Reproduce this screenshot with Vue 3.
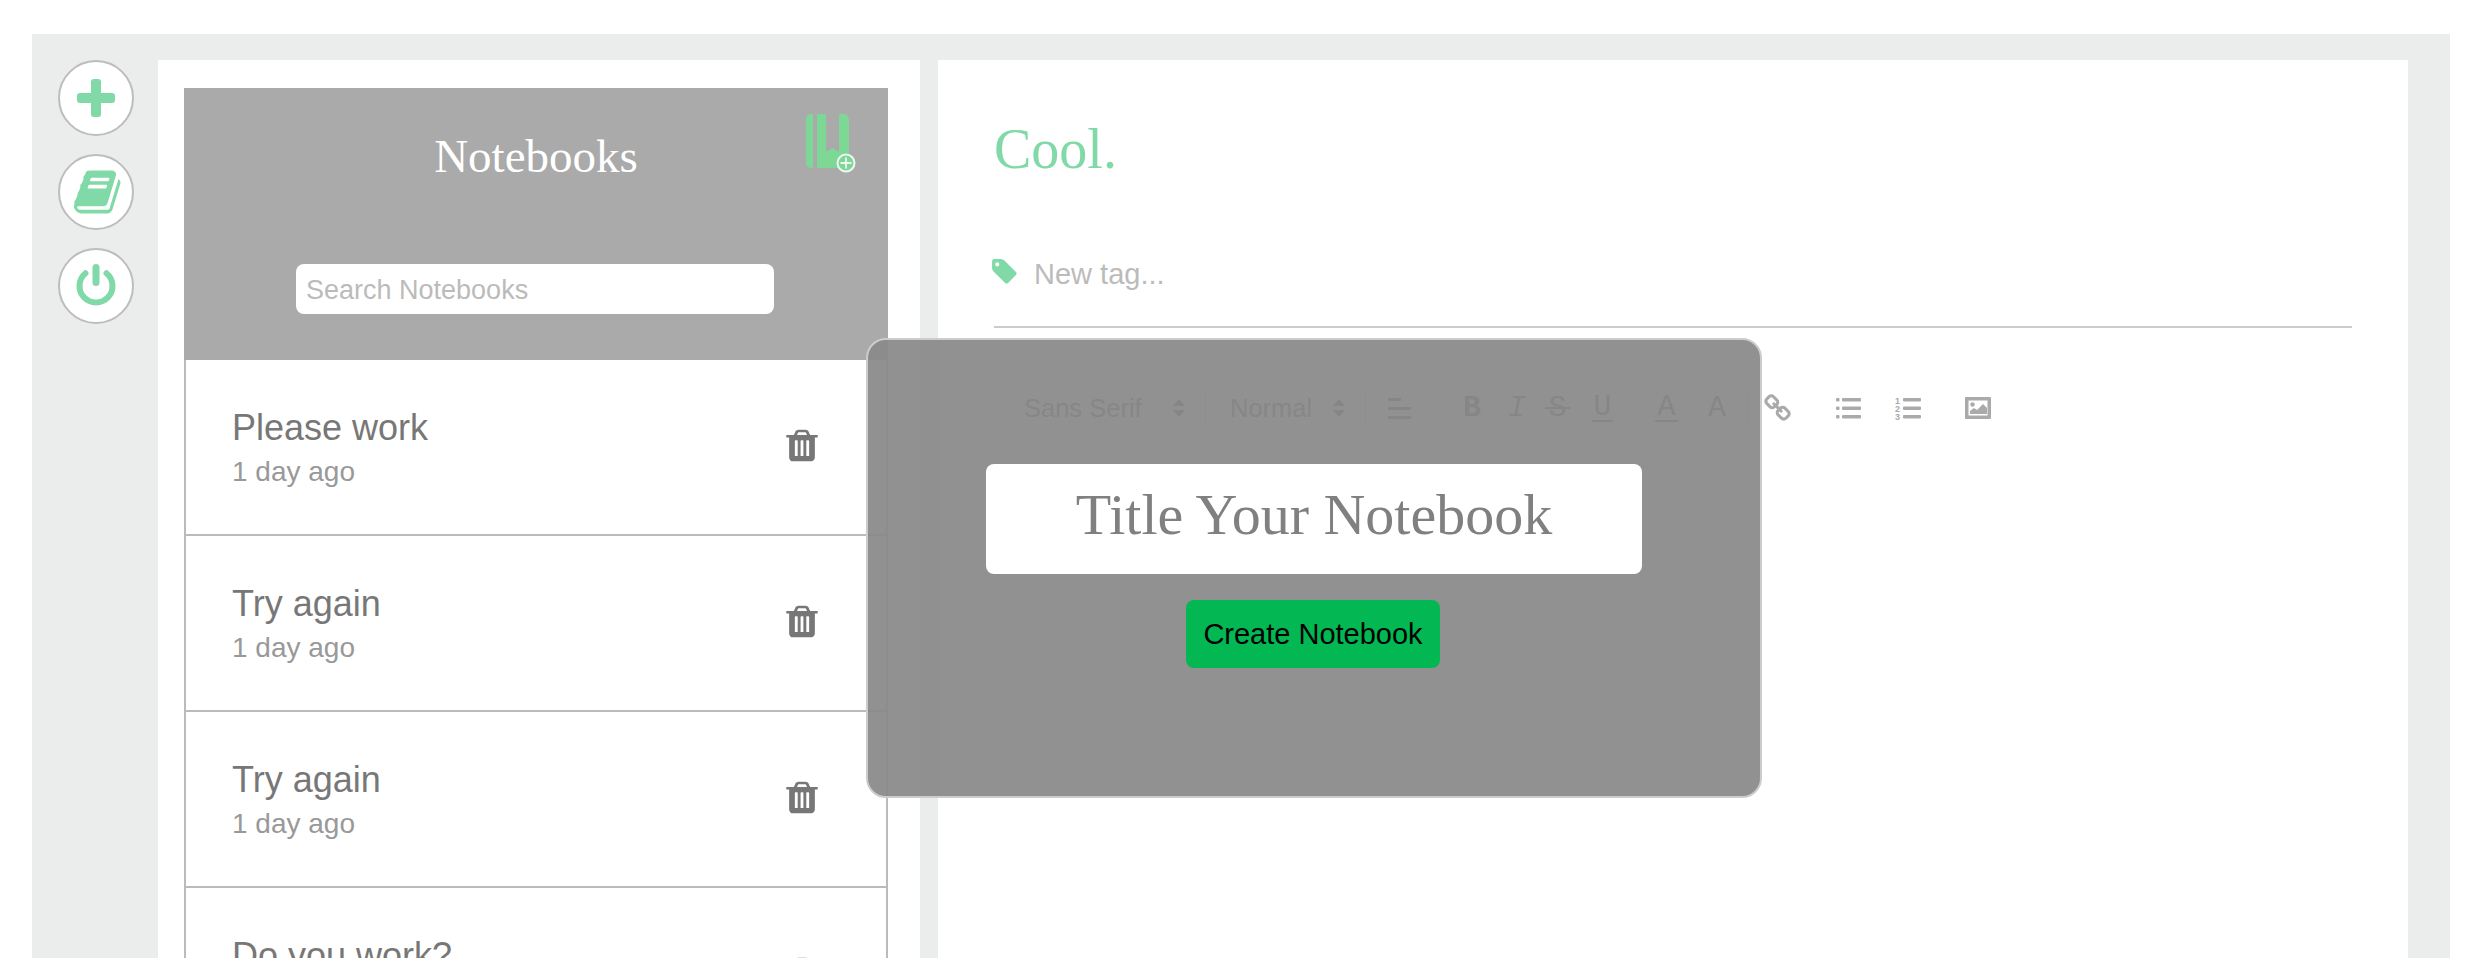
<script setup>
const notebooks = [
  { title: 'Please work', age: '1 day ago' },
  { title: 'Try again', age: '1 day ago' },
  { title: 'Try again', age: '1 day ago' },
  { title: 'Do you work?', age: '1 day ago' }
]

const trashPath = 'M704 1376v-704q0-14-9-23t-23-9h-64q-14 0-23 9t-9 23v704q0 14 9 23t23 9h64q14 0 23-9t9-23zm256 0v-704q0-14-9-23t-23-9h-64q-14 0-23 9t-9 23v704q0 14 9 23t23 9h64q14 0 23-9t9-23zm256 0v-704q0-14-9-23t-23-9h-64q-14 0-23 9t-9 23v704q0 14 9 23t23 9h64q14 0 23-9t9-23zm-544-992h448l-48-117q-7-9-17-11h-317q-10 2-17 11zm928 32v64q0 14-9 23t-23 9h-96v948q0 83-47 143.5t-113 60.5h-832q-66 0-113-58.5t-47-141.5v-952h-96q-14 0-23-9t-9-23v-64q0-14 9-23t23-9h309l70-167q15-37 54-63t79-26h320q40 0 79 26t54 63l70 167h309q14 0 23 9t9 23z'
</script>

<template>
<div class="page">
  <div class="frame">
    <nav class="rail">
      <button class="round">
        <svg width="38" height="38" viewBox="0 0 38 38" fill="#80d9a6"><rect x="14" y="0" width="10" height="38" rx="3"/><rect x="0" y="14" width="38" height="10" rx="3"/></svg>
      </button>
      <button class="round book">
        <svg width="50" height="50" viewBox="0 0 1792 1792"><path fill="#80d9a6" d="M1639 478q40 57 18 129l-275 906q-19 64-76.500 107.500t-122.500 43.500h-923q-77 0-148.500-53.500t-99.500-131.500q-24-67-2-127 0-4 3-27t4-37q1-8-3-21.500t-3-19.500q2-11 8-21t16.500-23.500 16.500-23.500q23-38 45-91.500t30-91.500q3-10 .5-30t-.5-28q3-11 17-28t17-23q21-36 42-92t25-90q1-9-2.500-32t.5-28q4-13 22-30.500t22-22.500q19-26 42.500-84.500t27.500-96.500q1-8-3-25.500t-2-26.500q2-8 9-18t18-23 17-21q8-12 16.500-30.500t15-35 16-36 19.500-32 26.500-23.500 36-11.500 47.500 5.500l-1 3q38-9 51-9h761q74 0 114 56t18 130l-274 906q-36 119-71.500 153.500t-128.500 34.500h-869q-27 0-38 15-11 16-1 43 24 70 144 70h923q29 0 56-15.500t35-41.500l300-987q7-22 5-57 38 15 59 43zm-1064 2q-4 13 2 22.500t20 9.500h608q13 0 25.500-9.500t16.500-22.500l21-64q4-13-2-22.500t-20-9.500h-608q-13 0-25.500 9.500t-16.500 22.500zm-83 256q-4 13 2 22.500t20 9.500h608q13 0 25.500-9.500t16.500-22.500l21-64q4-13-2-22.500t-20-9.500h-608q-13 0-25.500 9.500t-16.500 22.500z"/></svg>
      </button>
      <button class="round">
        <svg width="42" height="44" viewBox="0 0 42 44"><path d="M10.500 9.300a16.500 16.500 0 1 0 21 0" fill="none" stroke="#80d9a6" stroke-width="6" stroke-linecap="round"/><path d="M21 3.500v15" fill="none" stroke="#80d9a6" stroke-width="7" stroke-linecap="round"/></svg>
      </button>
    </nav>

    <section class="panel">
      <header class="panel-head">
        <h2>Notebooks</h2>
        <svg class="add-book" width="56" height="68" viewBox="0 0 56 68">
          <path fill="#7dd896" d="M10 6v54H8a5 5 0 0 1-5-5V11a5 5 0 0 1 5-5z"/>
          <path fill="#7dd896" d="M14 6h9v38l6.500-4 6.500 4V6h4a6 6 0 0 1 6 6v43a5 5 0 0 1-5 5H14z"/>
          <circle cx="43" cy="55" r="8.500" fill="#7dd896" stroke="#eef8f1" stroke-width="2"/>
          <path d="M43 49.500v11M37.500 55h11" stroke="#eef8f1" stroke-width="1.800"/>
        </svg>
        <input class="search" placeholder="Search Notebooks">
      </header>
      <ul class="list">
        <li v-for="(nb, i) in notebooks" :key="i" class="row">
          <div>
            <div class="row-title">{{ nb.title }}</div>
            <div class="row-age">{{ nb.age }}</div>
          </div>
          <svg class="trash" width="40" height="37" viewBox="0 0 1792 1792" preserveAspectRatio="none"><path fill="#777" :d="trashPath"/></svg>
        </li>
      </ul>
    </section>

    <main class="editor">
      <h1>Cool.</h1>
      <div class="tags">
        <svg width="29" height="29" viewBox="0 0 1792 1792"><path fill="#80d9a6" d="M576 448q0-53-37.500-90.500t-90.500-37.500-90.500 37.500-37.500 90.500 37.500 90.500 90.500 37.500 90.500-37.500 37.500-90.500zm1067 576q0 53-37 90l-491 492q-39 37-91 37-53 0-90-37l-715-716q-38-37-64.500-101t-26.500-117v-416q0-52 38-90t90-38h416q53 0 117 26.500t102 64.500l715 714q37 39 37 91z"/></svg>
        <span>New tag...</span>
      </div>
      <div class="toolbar">
        <span class="picker font">Sans Serif</span>
        <svg class="arrows" width="12" height="18" viewBox="0 0 12 18" fill="#444"><path d="M6 0l6 7H0zM6 18l6-7H0z"/></svg>
        <i class="sep"></i>
        <span class="picker size">Normal</span>
        <svg class="arrows tight" width="12" height="18" viewBox="0 0 12 18" fill="#444"><path d="M6 0l6 7H0zM6 18l6-7H0z"/></svg>
        <i class="sep"></i>
        <svg class="t-align" width="23" height="21" viewBox="0 0 23 21" fill="#444"><rect width="13" height="3"/><rect y="9" width="23" height="3"/><rect y="18" width="23" height="3"/></svg>
        <span class="mark m-b">B</span>
        <span class="mark m-i">I</span>
        <span class="mark m-s">S</span>
        <span class="mark m-u">U</span>
        <span class="mark m-a">A</span>
        <span class="mark m-a2">A</span>
        <i class="sep sep-last"></i>
        <svg class="t-link" width="29" height="29" viewBox="0 0 1792 1792">
          <path fill="#aaa" d="M1520 1216q0-40-28-68l-208-208q-28-28-68-28-42 0-72 32 3 3 19 18.500t21.500 21.500 15 19 13 25.500 3.500 27.500q0 40-28 68t-68 28q-15 0-27.500-3.500t-25.500-13-19-15-21.500-21.500-18.500-19q-33 31-33 73 0 40 28 68l206 207q27 27 68 27 40 0 68-26l147-146q28-28 28-67zm-703-705q0-40-28-68l-206-207q-28-28-68-28-39 0-68 27l-147 146q-28 28-28 67 0 40 28 68l208 208q27 27 68 27 42 0 72-31-3-3-19-18.500t-21.500-21.500-15-19-13-25.500-3.500-27.500q0-40 28-68t68-28q15 0 27.500 3.500t25.500 13 19 15 21.500 21.500 18.500 19q33-31 33-73zm895 705q0 120-85 203l-147 146q-83 83-203 83-121 0-204-85l-206-207q-83-83-83-203 0-123 88-209l-88-88q-86 88-208 88-120 0-204-84l-208-208q-84-84-84-204t85-203l147-146q83-83 203-83 121 0 204 85l206 207q83 83 83 203 0 123-88 209l88 88q86-88 208-88 120 0 204 84l208 208q84 84 84 204z"/>
        </svg>
        <svg class="t-ul" width="26" height="24" viewBox="0 0 26 24" fill="#aaa">
          <rect x="1" y="2" width="3.500" height="3.500" rx="1"/><rect x="1" y="10.500" width="3.500" height="3.500" rx="1"/><rect x="1" y="19" width="3.500" height="3.500" rx="1"/>
          <rect x="7" y="2" width="19" height="3.500" rx="1"/><rect x="7" y="10.500" width="19" height="3.500" rx="1"/><rect x="7" y="19" width="19" height="3.500" rx="1"/>
        </svg>
        <svg class="t-ol" width="26" height="24" viewBox="0 0 26 24" fill="#aaa">
          <text x="0" y="7.500" class="ol-num">1</text><text x="0" y="15.500" class="ol-num">2</text><text x="0" y="23.500" class="ol-num">3</text>
          <rect x="8" y="2" width="18" height="3.500" rx="1"/><rect x="8" y="10.500" width="18" height="3.500" rx="1"/><rect x="8" y="19" width="18" height="3.500" rx="1"/>
        </svg>
        <svg class="t-image" width="26" height="22" viewBox="0 0 26 22">
          <path fill="#aaa" fill-rule="evenodd" d="M1 0h24a1 1 0 0 1 1 1v20a1 1 0 0 1-1 1H1a1 1 0 0 1-1-1V1a1 1 0 0 1 1-1zM3.500 3.500v15h19v-15z"/>
          <circle cx="7.500" cy="7.500" r="2.200" fill="#aaa"/>
          <path fill="#aaa" d="M5 17v-3l4-3 3 2 6-6 4 4v6z"/>
        </svg>
      </div>
    </main>
  </div>

  <div class="modal">
    <input class="title-input" placeholder="Title Your Notebook">
    <button class="create">Create Notebook</button>
  </div>
</div>
</template>

<style>
html, body {
  margin: 0;
  overflow: hidden;
  background: #fff;
}
</style>

<style scoped>
.page {
  position: relative;
  height: 958px;
  overflow: hidden;
  padding: 34px 34px 0 32px;
  box-sizing: border-box;
  font-family: "Liberation Sans", Arial, sans-serif;
}

.frame {
  display: flex;
  height: 1100px;
  background: #ebeded;
  padding: 26px 42px 0 26px;
  box-sizing: border-box;
}

.rail {
  width: 76px;
  margin-right: 24px;
  display: flex;
  flex-direction: column;
  gap: 18px;
  flex: none;
}

.round {
  width: 76px;
  height: 76px;
  padding: 0;
  border-radius: 50%;
  border: 2px solid #bdbdbd;
  background: #fff;
  display: flex;
  align-items: center;
  justify-content: center;
  box-sizing: border-box;
}

.book svg {
  margin-left: 5px;
}

.panel {
  width: 762px;
  flex: none;
  background: #fff;
  padding: 28px 32px 0 26px;
  box-sizing: border-box;
}

.panel-head {
  position: relative;
  height: 272px;
  background: #aaa;
  display: flex;
  flex-direction: column;
  align-items: center;
}

.panel-head h2 {
  margin: 43px 0 0;
  font-family: "Liberation Serif", serif;
  font-weight: normal;
  font-size: 47px;
  line-height: 50px;
  color: #fff;
}

.add-book {
  position: absolute;
  top: 20px;
  right: 29px;
}

.search {
  margin: 83px 2px 0 0;
  width: 478px;
  height: 50px;
  border: 0;
  border-radius: 8px;
  padding: 2px 10px 0;
  box-sizing: border-box;
  font-family: inherit;
  font-size: 27px;
  outline: none;
}

.search::placeholder {
  color: #bbb;
}

.list {
  list-style: none;
  margin: 0;
  padding: 0;
  border-left: 2px solid #bbb;
  border-right: 2px solid #bbb;
}

.row {
  height: 176px;
  box-sizing: border-box;
  border-bottom: 2px solid #bbb;
  padding: 47px 64px 0 46px;
  display: flex;
  justify-content: space-between;
}

.row-title {
  font-size: 36px;
  line-height: 42px;
  color: #777;
}

.row-age {
  margin-top: 7px;
  font-size: 28px;
  line-height: 32px;
  color: #999;
}

.trash {
  margin-top: 20px;
  flex: none;
}

.editor {
  flex: 1;
  margin-left: 18px;
  background: #fff;
  padding: 54px 56px 0 56px;
  min-width: 0;
}

.editor h1 {
  margin: 0;
  font-family: "Liberation Serif", serif;
  font-weight: normal;
  font-size: 56px;
  line-height: 70px;
  color: #80d9a6;
}

.tags {
  margin-top: 73px;
  height: 69px;
  border-bottom: 2px solid #ccc;
  display: flex;
  align-items: flex-start;
  gap: 15px;
  font-size: 29px;
  line-height: 34px;
  color: #bbb;
}

.tags svg {
  margin-left: -4px;
}

.toolbar {
  margin-top: 48px;
  display: flex;
  align-items: center;
  height: 64px;
  font-size: 25.500px;
  color: #444;
}

.picker {
  flex: none;
}

.font {
  margin-left: 30px;
  width: 119px;
}

.size {
  margin-left: 24px;
  width: 82px;
}

.arrows {
  margin-left: 30px;
  flex: none;
}

.arrows.tight {
  margin-left: 21px;
}

.sep {
  margin-left: 20px;
  width: 1px;
  height: 30px;
  background: #ccc;
  flex: none;
}

.sep-last {
  margin-left: 23px;
}

.t-align {
  margin-left: 22px;
  flex: none;
}

.mark {
  flex: none;
  font-family: "Liberation Mono", monospace;
  font-size: 30px;
  line-height: 26px;
  text-align: center;
  position: relative;
}

.m-b {
  margin-left: 52px;
  width: 17px;
  font-weight: bold;
}

.m-i {
  margin-left: 28px;
  width: 14px;
  font-style: italic;
}

.m-s {
  margin-left: 23px;
  width: 25px;
}

.m-s::after {
  content: "";
  position: absolute;
  left: 0;
  right: 0;
  top: 12px;
  height: 2px;
  background: #444;
}

.m-u {
  margin-left: 22px;
  width: 21px;
  border-bottom: 2px solid #444;
}

.m-a {
  margin-left: 42px;
  width: 23px;
  border-bottom: 2px solid #444;
}

.m-a2 {
  margin-left: 30px;
  width: 17px;
}

.t-link {
  margin-left: 14px;
  flex: none;
}

.t-ul {
  margin-left: 43px;
  flex: none;
}

.t-ol {
  margin-left: 34px;
  flex: none;
}

.ol-num {
  font-family: "Liberation Sans", sans-serif;
  font-size: 9px;
  font-weight: bold;
}

.t-image {
  margin-left: 44px;
  flex: none;
}

.modal {
  position: absolute;
  left: 866px;
  top: 338px;
  width: 896px;
  height: 460px;
  box-sizing: border-box;
  background: rgba(138, 138, 138, 0.94);
  border: 2px solid #ccc;
  border-radius: 20px;
  display: flex;
  flex-direction: column;
  align-items: center;
  padding-top: 124px;
}

.title-input {
  width: 656px;
  height: 110px;
  box-sizing: border-box;
  border: 0;
  border-radius: 8px;
  padding: 0 0 10px;
  text-align: center;
  font-family: "Liberation Serif", serif;
  font-size: 58px;
  outline: none;
}

.title-input::placeholder {
  color: #808080;
}

.create {
  margin: 26px 2px 0 0;
  width: 254px;
  height: 68px;
  border: 0;
  border-radius: 8px;
  background: #03b853;
  color: #000;
  font-family: inherit;
  font-size: 29px;
  padding: 0;
}
</style>
